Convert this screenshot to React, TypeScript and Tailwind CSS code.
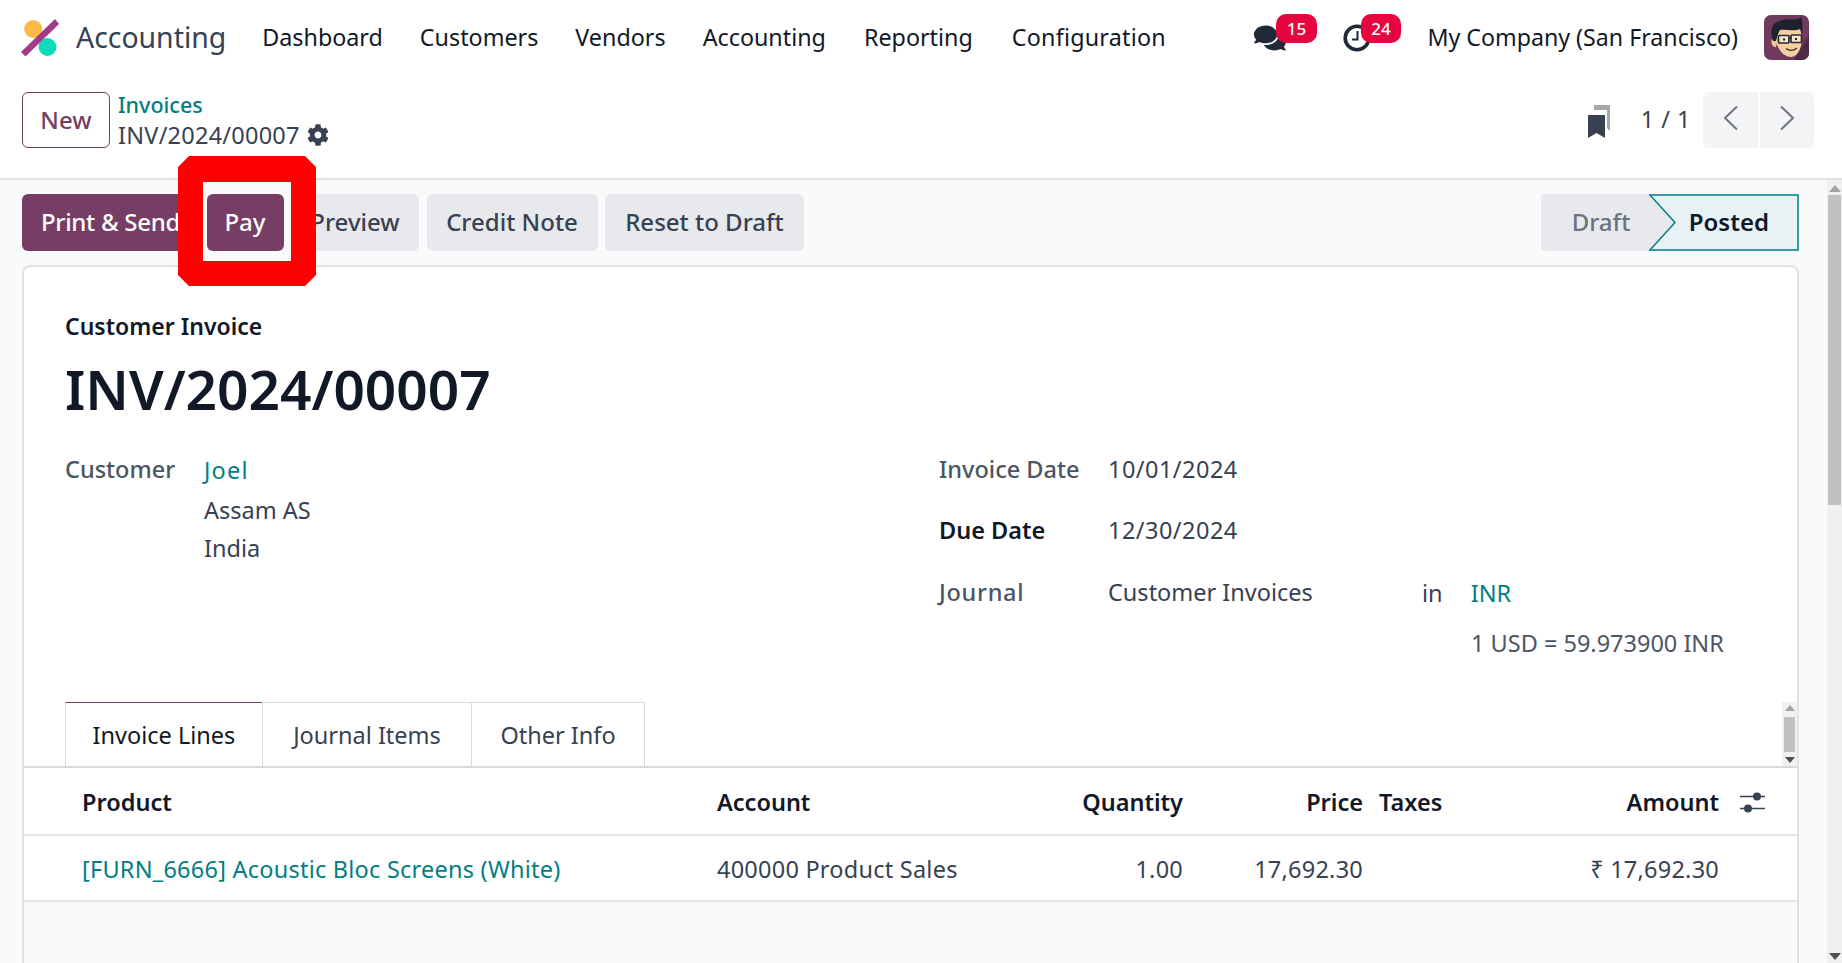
import { FaComments, FaCog } from "react-icons/fa";

function Logo() {
  return (
    <svg width="40" height="38" viewBox="0 0 40 38" className="shrink-0">
      <circle cx="12.2" cy="10" r="9" fill="#fbb945" />
      <circle cx="26.5" cy="28" r="9" fill="#0cdcb9" />
      <path d="M0 33 L4.5 37.5 L38 5 L34 0 Z" fill="#a23a88" />
    </svg>
  );
}

function Avatar() {
  return (
    <svg width="45" height="45" viewBox="0 0 45 45" className="shrink-0 rounded-[7px]">
      <rect width="45" height="45" fill="#6f3a5e" />
      <path d="M30 45 L45 45 L45 20 Z" fill="#4c2a48" />
      <path d="M8 24 C6 28 9 33 12 32 L14 24 Z" fill="#eec398" />
      <path d="M11 20 C11 30 18 42 27 42 C34 42 38 32 38 22 L37 13 L14 13 Z" fill="#f4cfa0" />
      <path d="M9 26 C5 14 9 7 16 6 C22 3 30 5 34 4 L38 2 C37 6 39 8 38.5 12 L38 21 L36 14 C30 17 20 14 16 15 C14 19 13 22 12 26 Z" fill="#1e2230" />
      <rect x="14.5" y="20.5" width="10.5" height="7.5" rx="1" fill="#fbe7cc" stroke="#262a36" strokeWidth="1.7" />
      <rect x="27" y="20" width="10.5" height="7.5" rx="1" fill="#fbe7cc" stroke="#262a36" strokeWidth="1.7" />
      <path d="M25 23 H27" stroke="#262a36" strokeWidth="1.5" />
      <circle cx="20" cy="24.5" r="1.2" fill="#262a36" />
      <circle cx="32" cy="24" r="1.2" fill="#262a36" />
      <path d="M22 33.5 Q27.5 37.5 33 33" fill="none" stroke="#3a2a2a" strokeWidth="1.3" />
    </svg>
  );
}

function Bookmarks() {
  return (
    <svg width="24" height="33" viewBox="0 0 24 33" className="mt-[3px] shrink-0">
      <path d="M7 0 H23 V26 L20 23 V5 H7 Z" fill="#a8a8a8" />
      <path d="M1 10 H18 V33 L9.5 28 L1 33 Z" fill="#374151" />
    </svg>
  );
}

function Clock() {
  return (
    <svg width="28" height="28" viewBox="0 0 28 28" className="mr-[56px] shrink-0">
      <circle cx="14" cy="14" r="11.8" fill="none" stroke="#1f2937" strokeWidth="3.6" />
      <path d="M14.5 7 V15.5 H9" fill="none" stroke="#1f2937" strokeWidth="2" />
    </svg>
  );
}

function Sliders() {
  return (
    <svg width="25" height="21" viewBox="0 0 25 21" className="shrink-0">
      <path d="M0 4.5 H25 M0 16.5 H25" stroke="#374151" strokeWidth="1.5" />
      <circle cx="17" cy="4.5" r="4" fill="#374151" />
      <circle cx="8" cy="16.5" r="4" fill="#374151" />
    </svg>
  );
}

function Chevron({ right }: { right?: boolean }) {
  return (
    <svg width="16" height="26" viewBox="0 0 16 26" className="mb-[4px]">
      <path d={right ? "M2 1.5 L14 13 L2 24.5" : "M14 1.5 L2 13 L14 24.5"} fill="none" stroke="#6f7480" strokeWidth="2" />
    </svg>
  );
}

function Annotation() {
  return (
    <svg width="138" height="130" viewBox="0 0 138 130" className="absolute left-[178px] top-[156px]">
      <path fillRule="evenodd" fill="#ff0000" d="M11 0 H127 L138 11 V119 L127 130 H11 L0 119 V11 Z M25 26 V105 H113 V26 Z" />
    </svg>
  );
}

function Badge({ children, className }: { children: string; className: string }) {
  return (
    <span className={"absolute top-[14px] flex h-[29px] items-center justify-center rounded-[10px] bg-[#e7053f] text-[17px] font-medium text-white " + className}>
      {children}
    </span>
  );
}

function Btn({ children, primary, w, start }: { children: string; primary?: boolean; w: string; start?: boolean }) {
  return (
    <button className={(primary ? "bg-[#763e64] text-white " : "bg-[#e7e9ed] text-[#374151] ") + (start ? "justify-start pl-[19px] tracking-[-0.3px] " : "justify-center ") + w + " flex h-[57px] items-center overflow-hidden rounded-[6px] pb-[2px] text-[24px] font-medium whitespace-nowrap"}>
      {children}
    </button>
  );
}

function Tab({ children, active, w }: { children: string; active?: boolean; w: string }) {
  return (
    <div className={(active ? "border-t-[#763e64] bg-white text-[#111827] " : "text-[#374151] ") + w + " -mr-px flex h-[64px] items-center justify-center border-[1.5px] border-b-0 border-[#d8dadd] pt-[2px]"}>
      {children}
    </div>
  );
}

export default function App() {
  const cols = "grid shrink-0 grid-cols-[635px_258px_208px_180px_116px_240px_1fr] items-center border-b-2 border-[#e3e4e6] pl-[58px] pt-[3px]";
  return (
    <div className="relative flex h-[963px] w-[1842px] flex-col overflow-hidden bg-white font-['Noto_Sans',sans-serif] text-[23.5px] text-[#374151]">
      <header className="flex h-[75px] shrink-0 items-center pl-[21px] pr-[33px]">
        <Logo />
        <span className="ml-[15px] text-[28.4px] text-[#374151]">Accounting</span>
        <nav className="ml-[36px] flex gap-[37px] text-[23.3px] text-[#111827]">
          <span>Dashboard</span>
          <span>Customers</span>
          <span>Vendors</span>
          <span>Accounting</span>
          <span className="ml-[1px]">Reporting</span>
          <span className="ml-[2px] tracking-[0.01em]">Configuration</span>
        </nav>
        <div className="relative ml-auto flex items-center">
          <FaComments className="mr-[57px] text-[32px] text-[#1f2937]" />
          <Clock />
          <span className="mr-[26px] text-[23.2px] text-[#111827]">My Company (San Francisco)</span>
          <Avatar />
        </div>
      </header>
      <Badge className="left-[1276px] w-[41px]">15</Badge>
      <Badge className="left-[1361px] w-[40px]">24</Badge>

      <div className="flex h-[105px] shrink-0 items-center border-b-2 border-[#e0e2e6] pb-[14px] pl-[22px] pr-[28px]">
        <button className="flex h-[56px] w-[88px] items-center justify-center rounded-[6px] border border-[#763e64] pt-[1px] text-[24px] font-medium text-[#763e64]">
          New
        </button>
        <div className="ml-[8px] flex flex-col leading-[30px]">
          <span className="text-[21.5px] font-medium text-[#017e84]">Invoices</span>
          <span className="flex items-center gap-[7px] tracking-[0.01em]">
            INV/2024/00007
            <FaCog className="text-[22px] text-[#374151]" />
          </span>
        </div>
        <div className="ml-auto flex items-center">
          <Bookmarks />
          <span className="ml-[30px] mr-[12px] tracking-[0.02em]">1 / 1</span>
          <div className="flex gap-[2px]">
            <div className="flex h-[56px] w-[55px] items-center justify-center rounded-l-[6px] bg-[#f3f4f6]">
              <Chevron />
            </div>
            <div className="flex h-[56px] w-[54px] items-center justify-center rounded-r-[6px] bg-[#f3f4f6]">
              <Chevron right />
            </div>
          </div>
        </div>
      </div>

      <div className="flex min-h-0 flex-1">
        <main className="flex min-w-0 flex-1 flex-col bg-[#f9fafb] pl-[22px] pr-[28px]">
          <div className="flex h-[85px] shrink-0 items-start pt-[14px]">
            <div className="flex gap-[7.5px]">
              <Btn primary start w="w-[177px]">Print &amp; Send</Btn>
              <Btn primary w="w-[77px]">Pay</Btn>
              <Btn w="w-[128px]">Preview</Btn>
              <Btn w="w-[171px]">Credit Note</Btn>
              <Btn w="w-[199px]">Reset to Draft</Btn>
            </div>
            <div className="relative ml-auto flex h-[57px] w-[258px] rounded-[4px] text-[24px] font-medium">
              <div className="flex w-[108px] items-center justify-center rounded-l-[4px] bg-[#e7e9ed] pb-[2px] pl-[12px] text-[#6b7280]">Draft</div>
              <div className="relative flex flex-1 items-center justify-end pb-[2px] pr-[30px] font-semibold text-[#111827]">
                <svg width="150" height="57" viewBox="0 0 150 57" className="absolute left-0 top-0">
                  <path d="M0 1 H149 V56 H0 L25 28.5 Z" fill="#e6f2f3" stroke="#017e84" strokeWidth="1.5" />
                  <path d="M0 0 L26 28.5 L0 57 Z" fill="#e7e9ed" />
                  <path d="M0 0 L26 28.5 L0 57" fill="none" stroke="#017e84" strokeWidth="1.5" />
                </svg>
                <span className="relative">Posted</span>
              </div>
            </div>
          </div>

          <section className="flex min-h-0 flex-1 flex-col rounded-t-[8px] border-2 border-b-0 border-[#e0e2e6] bg-white">
            <div className="shrink-0 pl-[41px] pr-[60px] pt-[44px] leading-[30px]">
              <div className="text-[23px] font-semibold text-[#111827]">Customer Invoice</div>
              <h1 className="mt-[15px] text-[55px] font-semibold leading-[66px] text-[#111827]">INV/2024/00007</h1>
              <div className="mt-[32px] grid grid-cols-[874px_1fr]">
                <div className="grid grid-cols-[139px_1fr]">
                  <span className="font-medium text-[#4b5563]">Customer</span>
                  <div className="flex flex-col">
                    <span className="mt-[1px] tracking-[0.05em] text-[#017e84]">Joel</span>
                    <span className="mt-[10px]">Assam AS</span>
                    <span className="mt-[8px]">India</span>
                  </div>
                </div>
                <div className="grid grid-cols-[169px_314px_1fr] gap-y-[31px]">
                  <span className="font-medium text-[#4b5563]">Invoice Date</span>
                  <span className="col-span-2 tracking-[0.02em]">10/01/2024</span>
                  <span className="font-semibold text-[#111827]">Due Date</span>
                  <span className="col-span-2 tracking-[0.02em]">12/30/2024</span>
                  <span className="mt-[1px] font-medium tracking-[0.03em] text-[#4b5563]">Journal</span>
                  <span className="mt-[1px]">Customer Invoices</span>
                  <span className="mt-[2px]">
                    in <span className="ml-[22px] text-[#017e84]">INR</span>
                  </span>
                  <span className="col-start-3 -mt-[11px] ml-[49px] whitespace-nowrap text-[#4b5563]">1 USD = 59.973900 INR</span>
                </div>
              </div>
            </div>

            <div className="relative mt-[44px] flex h-[66px] shrink-0 border-b-2 border-[#d8dadd] pl-[41px]">
              <Tab active w="w-[198px]">Invoice Lines</Tab>
              <Tab w="w-[210px]">Journal Items</Tab>
              <Tab w="w-[174px]">Other Info</Tab>
              <div className="absolute right-0 top-0 flex h-[64px] w-[15px] flex-col items-center justify-between bg-[#f1f1f1] py-[3px]">
                <span className="h-0 w-0 border-x-[5px] border-b-[6px] border-x-transparent border-b-[#a3a3a3]" />
                <span className="h-[35px] w-[11px] bg-[#c1c1c1]" />
                <span className="h-0 w-0 border-x-[5px] border-t-[6px] border-x-transparent border-t-[#505050]" />
              </div>
            </div>

            <div className={cols + " h-[68px] font-semibold text-[#111827]"}>
              <span>Product</span>
              <span>Account</span>
              <span className="text-right">Quantity</span>
              <span className="text-right">Price</span>
              <span className="pl-[16px]">Taxes</span>
              <span className="text-right">Amount</span>
              <span className="pl-[21px]"><Sliders /></span>
            </div>
            <div className={cols + " h-[66px]"}>
              <span className="whitespace-nowrap tracking-[0.01em] text-[#017e84]">[FURN_6666] Acoustic Bloc Screens (White)</span>
              <span className="tracking-[0.01em]">400000 Product Sales</span>
              <span className="text-right tracking-[0.01em]">1.00</span>
              <span className="text-right tracking-[0.01em]">17,692.30</span>
              <span />
              <span className="text-right tracking-[0.01em]">₹ 17,692.30</span>
            </div>
            <div className="flex-1 bg-[#fafafa]" />
          </section>
        </main>
        <aside className="flex w-[15px] shrink-0 flex-col items-center justify-between bg-[#f0f0f0] pb-[3px] pt-[5px]">
          <span className="h-0 w-0 border-x-[6px] border-b-[7px] border-x-transparent border-b-[#a3a3a3]" />
          <span className="mt-[3px] h-[310px] w-[13px] shrink-0 bg-[#c1c1c1]" />
          <span className="mt-auto h-0 w-0 border-x-[6px] border-t-[7px] border-x-transparent border-t-[#505050]" />
        </aside>
      </div>
      <Annotation />
    </div>
  );
}
